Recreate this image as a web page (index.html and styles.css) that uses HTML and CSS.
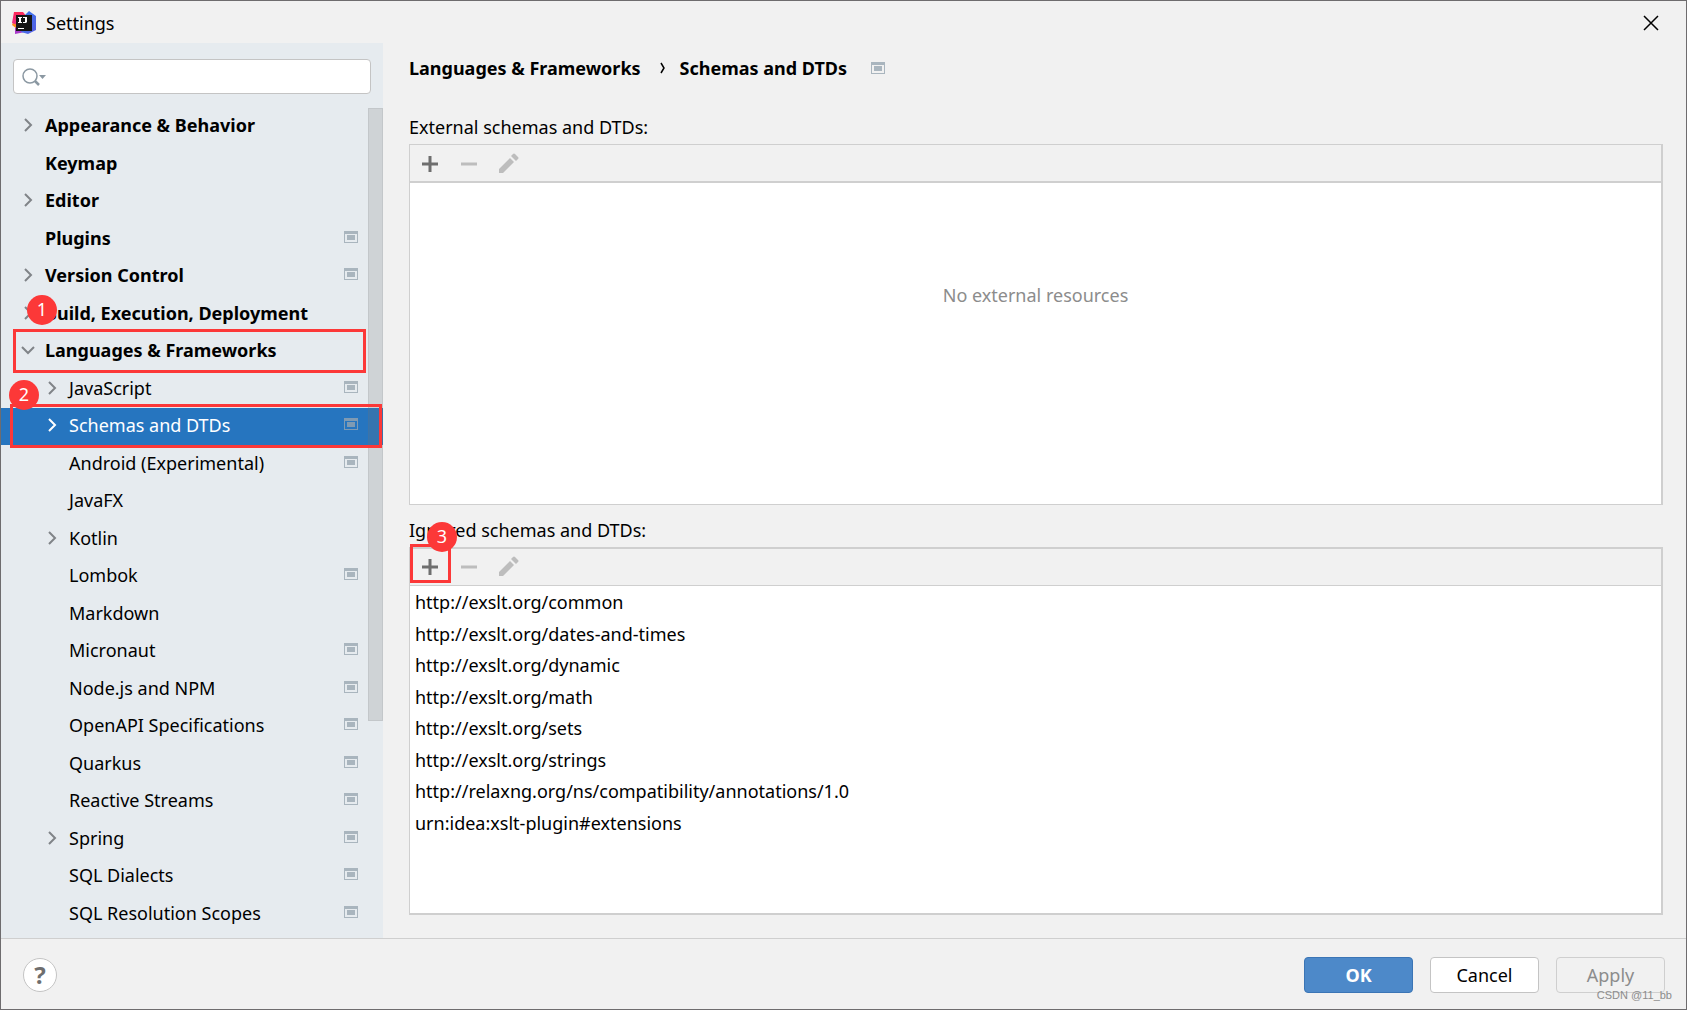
FILE: index.html
```html
<!DOCTYPE html>
<html lang="en">
<head>
<meta charset="utf-8">
<title>Settings</title>
<link rel="stylesheet" href="styles.css">
</head>
<body>
<svg class="sprite" aria-hidden="true">
  <symbol id="chevron" viewBox="0 0 14 14"><path d="M4 1l6 6-6 6" fill="none" stroke="currentColor" stroke-width="2"/></symbol>
  <symbol id="project" viewBox="0 0 14 12"><path fill-rule="evenodd" fill="currentColor" d="M0 0h14v12H0zM1 3v8h12V3z"/><path fill="currentColor" d="M3 4h8v5H3z"/></symbol>
  <symbol id="plus" viewBox="0 0 24 24"><path d="M12 4v16M4 12h16" stroke="currentColor" stroke-width="3"/></symbol>
  <symbol id="minus" viewBox="0 0 24 24"><path d="M4 12h16" stroke="currentColor" stroke-width="3"/></symbol>
  <symbol id="pencil" viewBox="0 0 24 24"><path fill="currentColor" d="M3 17L14 6l4 4L7 21H3zM15 4l2-2q1-1 2 0l3 3q1 1 0 2l-2 2z"/></symbol>
</svg>

<div class="window">
  <header class="titlebar">
    <svg class="logo" viewBox="0 0 24 24" aria-hidden="true">
      <defs>
        <linearGradient id="blue" x1="0" y1="0" x2="1" y2="1"><stop offset="0" stop-color="#2f7cf0"/><stop offset="1" stop-color="#5a5ce0"/></linearGradient>
        <linearGradient id="pink" x1="0" y1="0" x2="0" y2="1"><stop offset="0" stop-color="#fe2857"/><stop offset="1" stop-color="#e8308c"/></linearGradient>
      </defs>
      <path fill="#ff8a1f" d="M0 14l2-5 6 3-3 6z"/>
      <path fill="#a839c9" d="M3 17l4-3 6 7-10 2z"/>
      <path fill="url(#pink)" d="M2 1h9l4 5-9 8-6-2z"/>
      <path fill="url(#blue)" d="M13 4l4-4 7 5v14l-8 4-7-2 6-8z"/>
      <path fill="#151515" d="M4 4h16v16H4z"/>
      <path fill="#fff" d="M6 6h4v1H9v4h1v1H6v-1h1V7H6zM11 6h4v5l-1 1h-3v-1h2V7h-2zM6 17h6v1H6z"/>
    </svg>
    <h1 class="title">Settings</h1>
    <button class="close" type="button" aria-label="Close">
      <svg viewBox="0 0 16 16"><path d="M1 1l14 14M15 1L1 15" stroke="#000" stroke-width="1.5"/></svg>
    </button>
  </header>

  <div class="content">
    <aside class="sidebar">
      <div class="search">
        <svg class="search-icon" viewBox="0 0 26 20" aria-hidden="true"><circle cx="8" cy="9" r="7" fill="none" stroke="#8b98a2" stroke-width="1.5"/><path d="M13 14l4 4" stroke="#8b98a2" stroke-width="2.5"/><path d="M17 8h7l-3.500 4z" fill="#8b98a2"/></svg>
        <input class="search-input" type="text" aria-label="Search settings">
      </div>
      <nav class="tree" aria-label="Settings categories">
        <a class="row top" href="#"><svg class="chevron"><use href="#chevron"/></svg><span class="name">Appearance &amp; Behavior</span></a>
        <a class="row top" href="#"><span class="chevron"></span><span class="name">Keymap</span></a>
        <a class="row top" href="#"><svg class="chevron"><use href="#chevron"/></svg><span class="name">Editor</span></a>
        <a class="row top" href="#"><span class="chevron"></span><span class="name">Plugins</span><svg class="mark"><use href="#project"/></svg></a>
        <a class="row top" href="#"><svg class="chevron"><use href="#chevron"/></svg><span class="name">Version Control</span><svg class="mark"><use href="#project"/></svg></a>
        <a class="row top" href="#"><svg class="chevron"><use href="#chevron"/></svg><span class="name">Build, Execution, Deployment</span></a>
        <a class="row top" href="#"><svg class="chevron open"><use href="#chevron"/></svg><span class="name">Languages &amp; Frameworks</span><span class="frame frame-group"></span><span class="badge badge-group">1</span></a>
        <a class="row" href="#"><svg class="chevron"><use href="#chevron"/></svg><span class="name">JavaScript</span><svg class="mark"><use href="#project"/></svg></a>
        <a class="row selected" href="#" aria-current="page"><svg class="chevron"><use href="#chevron"/></svg><span class="name">Schemas and DTDs</span><svg class="mark"><use href="#project"/></svg><span class="frame frame-page"></span><span class="badge badge-page">2</span></a>
        <a class="row" href="#"><span class="chevron"></span><span class="name">Android (Experimental)</span><svg class="mark"><use href="#project"/></svg></a>
        <a class="row" href="#"><span class="chevron"></span><span class="name">JavaFX</span></a>
        <a class="row" href="#"><svg class="chevron"><use href="#chevron"/></svg><span class="name">Kotlin</span></a>
        <a class="row" href="#"><span class="chevron"></span><span class="name">Lombok</span><svg class="mark"><use href="#project"/></svg></a>
        <a class="row" href="#"><span class="chevron"></span><span class="name">Markdown</span></a>
        <a class="row" href="#"><span class="chevron"></span><span class="name">Micronaut</span><svg class="mark"><use href="#project"/></svg></a>
        <a class="row" href="#"><span class="chevron"></span><span class="name">Node.js and NPM</span><svg class="mark"><use href="#project"/></svg></a>
        <a class="row" href="#"><span class="chevron"></span><span class="name">OpenAPI Specifications</span><svg class="mark"><use href="#project"/></svg></a>
        <a class="row" href="#"><span class="chevron"></span><span class="name">Quarkus</span><svg class="mark"><use href="#project"/></svg></a>
        <a class="row" href="#"><span class="chevron"></span><span class="name">Reactive Streams</span><svg class="mark"><use href="#project"/></svg></a>
        <a class="row" href="#"><svg class="chevron"><use href="#chevron"/></svg><span class="name">Spring</span><svg class="mark"><use href="#project"/></svg></a>
        <a class="row" href="#"><span class="chevron"></span><span class="name">SQL Dialects</span><svg class="mark"><use href="#project"/></svg></a>
        <a class="row" href="#"><span class="chevron"></span><span class="name">SQL Resolution Scopes</span><svg class="mark"><use href="#project"/></svg></a>
        <span class="scrollbar"></span>
      </nav>
    </aside>

    <main class="page">
      <div class="breadcrumb">
        <a href="#">Languages &amp; Frameworks</a>
        <svg class="crumb-arrow" viewBox="0 0 6 12"><path d="M1 1l3 5-3 5" fill="none" stroke="#000" stroke-width="1.5"/></svg>
        <h2 class="crumb-current">Schemas and DTDs</h2>
        <svg class="crumb-mark"><use href="#project"/></svg>
      </div>

      <h3 class="label">External schemas and DTDs:</h3>
      <section class="panel panel-external">
        <div class="toolbar">
          <button class="tool" type="button" aria-label="Add"><svg><use href="#plus"/></svg></button>
          <button class="tool" type="button" aria-label="Remove" disabled><svg><use href="#minus"/></svg></button>
          <button class="tool" type="button" aria-label="Edit" disabled><svg><use href="#pencil"/></svg></button>
        </div>
        <p class="empty">No external resources</p>
      </section>

      <h3 class="label label-ignored">Ignored schemas and DTDs:</h3>
      <section class="panel panel-ignored">
        <div class="toolbar">
          <button class="tool" type="button" aria-label="Add"><svg><use href="#plus"/></svg><span class="frame frame-add"></span><span class="badge badge-add">3</span></button>
          <button class="tool" type="button" aria-label="Remove" disabled><svg><use href="#minus"/></svg></button>
          <button class="tool" type="button" aria-label="Edit" disabled><svg><use href="#pencil"/></svg></button>
        </div>
        <ul class="schemas">
          <li>http://exslt.org/common</li>
          <li>http://exslt.org/dates-and-times</li>
          <li>http://exslt.org/dynamic</li>
          <li>http://exslt.org/math</li>
          <li>http://exslt.org/sets</li>
          <li>http://exslt.org/strings</li>
          <li>http://relaxng.org/ns/compatibility/annotations/1.0</li>
          <li>urn:idea:xslt-plugin#extensions</li>
        </ul>
      </section>
    </main>
  </div>

  <footer class="footer">
    <button class="help" type="button" aria-label="Help">?</button>
    <div class="actions">
      <button class="btn primary" type="button">OK</button>
      <button class="btn" type="button">Cancel</button>
      <button class="btn" type="button" disabled>Apply</button>
    </div>
    <span class="watermark">CSDN @11_bb</span>
  </footer>
</div>
</body>
</html>
```
FILE: styles.css
```css
* {
  box-sizing: border-box;
}

body {
  margin: 0;
  font: 18px/24px "Noto Sans", "Open Sans", sans-serif;
  color: #000;
  background: #f1f1f1;
}

button,
input {
  margin: 0;
  padding: 0;
  font: inherit;
  color: inherit;
}

a {
  color: inherit;
  text-decoration: none;
}

h1,
h2,
h3,
p,
ul {
  margin: 0;
  padding: 0;
  font: inherit;
}

.sprite {
  display: none;
}

.window {
  display: flex;
  flex-direction: column;
  min-height: 100vh;
  border: 1px solid #6e6c6e;
}

/* Title bar */
.titlebar {
  display: flex;
  align-items: center;
  gap: 10px;
  height: 42px;
  padding: 2px 27px 0 11px;
}

.logo {
  width: 24px;
  height: 24px;
}

.close {
  display: flex;
  margin-left: auto;
  border: 0;
  background: none;
}

.close svg {
  width: 16px;
  height: 16px;
}

.content {
  display: flex;
  flex: 1;
}

/* Sidebar */
.sidebar {
  flex: none;
  width: 382px;
  padding-top: 16px;
  background: #e6ebef;
}

.search {
  display: flex;
  align-items: center;
  height: 35px;
  margin: 0 12px 14px;
  padding-left: 8px;
  border: 1px solid #c4c4c4;
  border-radius: 4px;
  background: #fff;
}

.search-icon {
  flex: none;
  width: 26px;
  height: 20px;
}

.search-input {
  flex: 1;
  min-width: 0;
  border: 0;
  outline: 0;
  background: none;
}

.tree {
  position: relative;
  display: flex;
  flex-direction: column;
}

.row {
  position: relative;
  display: flex;
  align-items: center;
  gap: 6px;
  height: 37px;
  padding: 0 25px 3px 44px;
}

.row:nth-child(even) {
  height: 38px;
}

.row.top {
  padding-left: 20px;
  font-weight: bold;
}

.name {
  flex: 1;
}

.chevron {
  flex: none;
  width: 14px;
  height: 14px;
  margin-right: 4px;
  color: #808488;
}

.chevron.open {
  transform: rotate(90deg);
}

.mark {
  flex: none;
  width: 14px;
  height: 12px;
  margin-bottom: 2px;
  color: #a9b5be;
}

.row.selected {
  color: #fff;
  background: #2675bf;
}

.selected .chevron {
  color: #fff;
}

.selected .mark {
  color: #7e9ab3;
}

.scrollbar {
  position: absolute;
  top: 0;
  right: 0;
  width: 15px;
  height: 613px;
  border: 1px solid rgba(115, 115, 115, 0.12);
  background: rgba(115, 115, 115, 0.2);
}

/* Numbered callouts */
.frame,
.badge {
  position: absolute;
  z-index: 1;
}

.frame {
  border: 3px solid #fc3838;
}

.badge {
  width: 30px;
  height: 30px;
  border-radius: 50%;
  font-weight: normal;
  line-height: 28px;
  text-align: center;
  color: #fff;
  background: #fc3838;
}

.frame-group {
  inset: -4px 17px -3px 12px;
}

.badge-group {
  top: -38px;
  left: 26px;
}

.frame-page {
  inset: -4px 1px -3px 9px;
}

.badge-page {
  top: -28px;
  left: 8px;
}

.frame-add {
  inset: -11px -9px -4px -8px;
}

.badge-add {
  top: -33px;
  left: 9px;
}

/* Settings page */
.page {
  display: flex;
  flex: 1;
  flex-direction: column;
  min-width: 0;
  padding: 13px 23px 23px 26px;
}

.breadcrumb {
  display: flex;
  align-items: center;
  margin-bottom: 35px;
  font-weight: bold;
}

.crumb-arrow {
  width: 6px;
  height: 12px;
  margin: 0 14px 0 19px;
}

.crumb-mark {
  width: 14px;
  height: 12px;
  margin-left: 24px;
  color: #a9b5be;
}

.label {
  margin-bottom: 5px;
}

.label-ignored {
  margin-top: 13px;
}

.panel {
  display: flex;
  flex-direction: column;
  border: 1px solid #cfcfcf;
  border-right-width: 2px;
  background: #fff;
}

.panel-external {
  flex: 1 1 360px;
}

.panel-ignored {
  flex: 1 1 367px;
  border-width: 2px 2px 2px 1px;
}

.toolbar {
  display: flex;
  align-items: center;
  gap: 15px;
  height: 38px;
  padding: 2px 0 0 8px;
  border-bottom: 2px solid #cfcfcf;
  background: #f1f1f1;
}

.panel-ignored .toolbar {
  height: 37px;
  padding-top: 0;
  border-bottom-width: 1px;
}

.tool {
  position: relative;
  display: flex;
  border: 0;
  color: #6e6e6e;
  background: none;
}

.tool:disabled {
  color: #bdbdbd;
}

.tool svg {
  width: 24px;
  height: 24px;
}

.empty {
  padding-top: 100px;
  text-align: center;
  color: #8c8c8c;
}

.schemas {
  padding: 1px 0 0 5px;
  list-style: none;
}

.schemas li {
  line-height: 31px;
}

.schemas li:nth-child(even) {
  line-height: 32px;
}

/* Footer */
.footer {
  position: relative;
  display: flex;
  align-items: center;
  justify-content: space-between;
  height: 71px;
  padding: 1px 21px 0 22px;
  border-top: 1px solid #cfcfcf;
}

.help {
  width: 34px;
  height: 34px;
  border: 1px solid #c4c4c4;
  border-radius: 50%;
  font-size: 24px;
  font-weight: bold;
  line-height: 32px;
  color: #6e6e6e;
  background: #fff;
}

.actions {
  display: flex;
  gap: 17px;
}

.btn {
  width: 109px;
  height: 36px;
  border: 1px solid #c4c4c4;
  border-radius: 4px;
  background: #fff;
}

.btn.primary {
  border-color: #3b75b5;
  font-weight: bold;
  color: #fff;
  background: #4d89c9;
}

.btn:disabled {
  border-color: #cfcfcf;
  color: #8c8c8c;
  background: none;
}

.watermark {
  position: absolute;
  right: 14px;
  bottom: 6px;
  font: 11px/16px "Liberation Sans", Arial, sans-serif;
  color: #8c8c8c;
}
```
